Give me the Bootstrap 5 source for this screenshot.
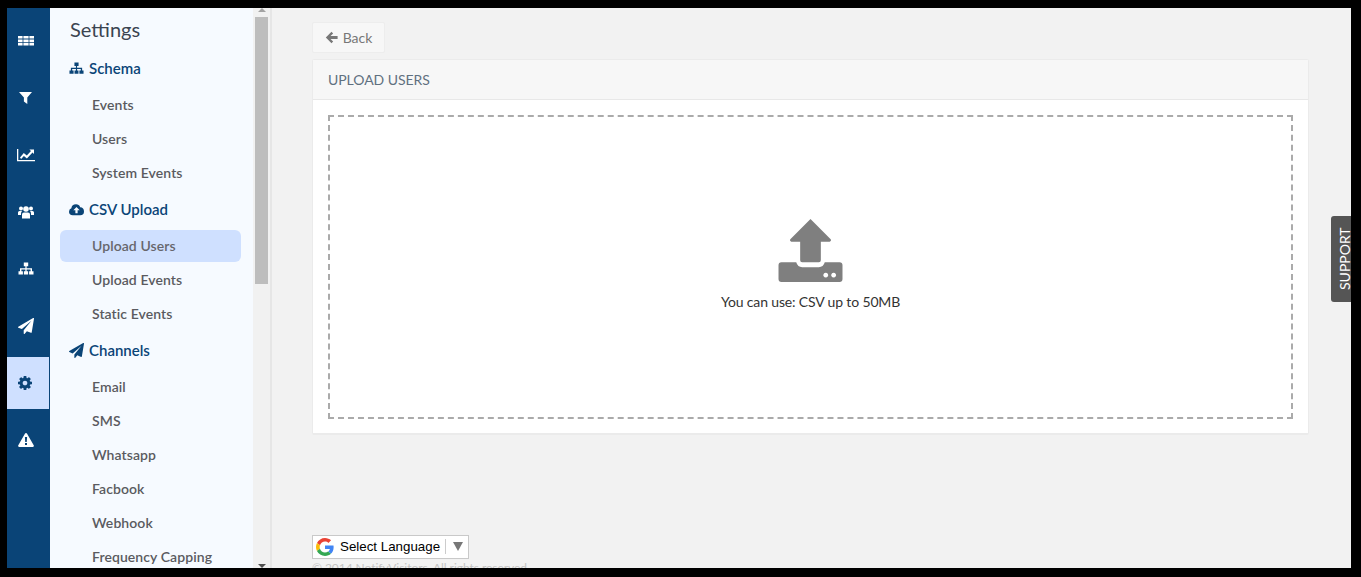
<!DOCTYPE html>
<html lang="en">
<head>
  <meta charset="UTF-8" />
  <meta name="viewport" content="width=device-width, initial-scale=1" />
  <title>Upload Users</title>
  <link href="https://cdn.jsdelivr.net/npm/bootstrap@5.3.0/dist/css/bootstrap.min.css" rel="stylesheet" />
  <style>
    html, body {
      height: 100%;
      margin: 0;
      overflow: hidden;
      background: #000;
      font-family: 'Lato', sans-serif;
    }
    .app-frame {
      position: relative;
      margin: 8px 10px 0 7px;
      width: 1344px;
      height: 560px;
      overflow: hidden;
      background: #f2f2f2;
    }
    .icon-rail {
      width: 43px;
      background: #0a4477;
      padding-top: 4px;
    }
    .rail-link {
      height: 57px;
      padding-right: 6px;
      color: #fff;
    }
    .rail-link svg { width: 16px; height: 16px; fill: currentColor; }
    .rail-link.current {
      height: 52px;
      margin: 3px 0 2px;
      padding-right: 6px;
      color: #0a4477;
      background: #cfe0ff;
      border-right: 1px solid #0a4477;
    }
    .side-panel {
      width: 203px;
      background: #f6faff;
      overflow: hidden;
      padding-left: 10px;
      padding-right: 12px;
    }
    .panel-title {
      font-size: 20px;
      font-weight: 400;
      color: #3b4451;
      line-height: 24px;
      margin: 9px 0 10px 10px;
    }
    .group-head {
      height: 34px;
      margin: 3px 0;
      padding-left: 9px;
      color: #0a4477;
      font-size: 15px;
      font-weight: 600;
      gap: 5px;
    }
    .group-head.lifted { margin: 2px 0 4px; }
    .group-head.tight { margin: 2px 0 3px; }
    .group-head svg { width: 15px; height: 15px; fill: currentColor; flex: none; }
    .side-link {
      height: 34px;
      line-height: 34px;
      padding-left: 32px;
      font-size: 14px;
      font-weight: 600;
      letter-spacing: .08px;
      color: #5a5a60;
      text-decoration: none;
      border-radius: 6px;
    }
    .side-link.current {
      height: 32px;
      line-height: 32px;
      margin: 0 0 1px;
      background: #cfe0ff;
      color: #66666c;
    }
    .side-scroll {
      width: 17px;
      background: #f1f1f1;
      position: relative;
      flex: none;
    }
    .side-scroll i {
      display: block;
      margin: 9px 2px 0;
      height: 267px;
      background: #bdbdbd;
    }
    .side-scroll b {
      position: absolute;
      left: 5px;
      border-left: 4px solid transparent;
      border-right: 4px solid transparent;
    }
    .arrow-up { top: 0; border-bottom: 4px solid #a3a3a3; }
    .arrow-down { bottom: 0; border-top: 4px solid #505050; }
    .main-area {
      border-left: 2px solid #e6e6e6;
      padding: 14px 42px 0 40px;
      min-width: 0;
    }
    .back-btn {
      width: 73px;
      height: 31px;
      padding: 0;
      background: #f7f7f7;
      border: 1px solid #ededed;
      border-radius: 2px;
      color: #777;
      font-size: 14px;
      gap: 5px;
    }
    .back-btn svg { width: 13px; height: 13px; fill: #777; }
    .upload-card {
      margin-top: 6px;
      height: 376px;
      border: 1px solid #ebebeb;
      border-bottom-width: 2px;
      border-radius: 2px;
      background: #fff;
    }
    .upload-card .card-header {
      height: 40px;
      padding: 0 15px;
      line-height: 40px;
      background: #f7f7f7;
      border-bottom: 1px solid #e8e8e8;
      border-radius: 0;
      color: #5f7080;
      font-size: 14px;
      letter-spacing: -.05px;
    }
    .upload-card .card-body { padding: 15px; }
    .drop-box {
      height: 304px;
      border: 2px dashed #aaa;
      color: #333;
      font-size: 14px;
      letter-spacing: -.15px;
      padding-top: 102px;
    }
    .drop-box svg { width: 65px; height: 63px; fill: #7f7f7f; display: block; }
    .drop-box p { margin: 10px 0 0; line-height: 20px; }
    .lang-box {
      position: absolute;
      left: 305px;
      top: 527px;
      width: 157px;
      height: 24px;
      background: #fff;
      border: 1px solid #c9c9c9;
      font-family: 'Liberation Sans', sans-serif;
      font-size: 13.33px;
      line-height: 20px;
      color: #000;
      padding: 0 0 1px 3px;
      white-space: nowrap;
    }
    .lang-box svg { width: 18px; height: 18px; margin-right: 6px; flex: none; }
    .lang-sep { width: 1px; height: 15px; background: #ccc; margin: 0 7px 0 5px; flex: none; }
    .lang-caret {
      border-left: 5px solid transparent;
      border-right: 5px solid transparent;
      border-top: 9px solid #777;
      flex: none;
    }
    .copy-line {
      position: absolute;
      left: 305px;
      top: 552px;
      font-size: 12px;
      line-height: 16px;
      letter-spacing: -.05px;
      color: #c4c4c4;
      white-space: nowrap;
    }
    .support-tab {
      position: absolute;
      right: 0;
      top: 208px;
      width: 20px;
      height: 86px;
      padding-right: 8px;
      background: #555;
      color: #fff;
      font-size: 14px;
      line-height: 12px;
      writing-mode: vertical-rl;
      transform: rotate(180deg);
      border-radius: 0 3px 3px 0;
    }
  </style>
</head>
<body>
  <div class="app-frame d-flex">
    <div class="icon-rail d-flex flex-column flex-shrink-0">
      <a class="rail-link d-flex align-items-center justify-content-center">
        <svg viewBox="0 0 16 16"><path d="M0 3h4.600v2.600H0zM5.400 3h5.200v2.600H5.400zM11.400 3H16v2.600h-4.600zM0 6.400h4.600V9H0zM5.400 6.400h5.200V9H5.400zM11.400 6.400H16V9h-4.600zM0 9.800h4.600v2.600H0zM5.400 9.800h5.200v2.600H5.400zM11.400 9.800H16v2.600h-4.600z"/></svg>
      </a>
      <a class="rail-link d-flex align-items-center justify-content-center">
        <svg viewBox="0 0 16 16"><path d="M1 2h13L9.300 7.600V14l-3.400-2.400V7.600z"/></svg>
      </a>
      <a class="rail-link d-flex align-items-center justify-content-center">
        <svg viewBox="0 0 18 16" style="width:18px"><path d="M0 2h1.300v11H18v1.300H0z"/><path d="M3 10.500 6.800 6l3 2.600L14 4l-1.600-1.500H17v4.600l-1.500-1.500-5.600 6-3-2.600-2.800 3z"/></svg>
      </a>
      <a class="rail-link d-flex align-items-center justify-content-center">
        <svg viewBox="0 0 16 16"><circle cx="8" cy="5" r="2.800"/><circle cx="3" cy="4.400" r="2"/><circle cx="13" cy="4.400" r="2"/><path d="M4 14.500V10.500q0-2 2-2h4q2 0 2 2v4zM0 11V8.500Q0 7 1.500 7H4q-1 .8-1 3v1zM16 11V8.500Q16 7 14.500 7H12q1 .8 1 3v1z"/></svg>
      </a>
      <a class="rail-link d-flex align-items-center justify-content-center">
        <svg viewBox="0 0 16 16"><path d="M5.800 1.500h4.400v3.700H8.600v2h5.400v3h1.500v3.300h-4.400v-3.300h1.500V8.500H8.600v1.700h1.500v3.300H5.900v-3.300h1.500V8.500H3.400v1.700h1.500v3.300H.5v-3.300H2v-3h5.400v-2H5.800z"/></svg>
      </a>
      <a class="rail-link d-flex align-items-center justify-content-center">
        <svg viewBox="0 0 1792 1792"><path d="M1764 11q33 24 27 64l-256 1536q-5 29-32 45-14 8-31 8-11 0-24-5l-453-185-242 295q-18 23-49 23-13 0-22-4-19-7-30.500-23.500t-11.500-36.500v-349l864-1059-1069 925-395-162q-37-14-40-55-2-40 32-59l1664-960q15-9 32-9 20 0 36 11z"/></svg>
      </a>
      <a class="rail-link current d-flex align-items-center justify-content-center">
        <svg viewBox="128 128 1536 1536" style="width:14px;height:14px"><path fill-rule="evenodd" d="M1152 896q0-106-75-181t-181-75-181 75-75 181 75 181 181 75 181-75 75-181zm512-109v222q0 12-8 23t-20 13l-185 28q-19 54-39 91 35 50 107 138 10 12 10 25t-9 23q-27 37-99 108t-94 71q-12 0-26-9l-138-108q-44 23-91 38-16 136-29 186-7 28-36 28h-222q-14 0-24.500-8.500t-11.500-21.500l-28-184q-49-16-90-37l-141 107q-10 9-25 9-14 0-25-11-126-114-165-168-7-10-7-23 0-12 8-23 15-21 51-66.500t54-70.500q-27-50-41-99l-183-27q-13-2-21-12.500t-8-23.500v-222q0-12 8-23t19-13l186-28q14-46 39-92-40-57-107-138-10-12-10-24 0-10 9-23 26-36 98.500-107.500t94.500-71.500q13 0 26 10l138 107q44-23 91-38 16-136 29-186 7-28 36-28h222q14 0 24.500 8.500t11.500 21.500l28 184q49 16 90 37l142-107q9-9 24-9 13 0 25 10 129 119 165 170 7 8 7 22 0 12-8 23-15 21-51 66.500t-54 70.500q26 50 41 98l183 28q13 2 21 12.500t8 23.500z"/></svg>
      </a>
      <a class="rail-link d-flex align-items-center justify-content-center">
        <svg viewBox="0 0 16 16"><path fill-rule="evenodd" d="M8 1q.7 0 1.100.7l6.600 11.600q.7 1.400-.8 1.700H1.100q-1.500-.3-.8-1.700L6.900 1.700Q7.300 1 8 1zM6.900 5l.3 5h1.600l.3-5zM7 11v2h2v-2z"/></svg>
      </a>
    </div>

    <div class="side-panel flex-shrink-0">
      <h5 class="panel-title">Settings</h5>
      <div class="group-head d-flex align-items-center">
        <svg viewBox="0 0 16 16"><path d="M5.800 1.500h4.400v3.700H8.600v2h5.400v3h1.500v3.300h-4.400v-3.300h1.500V8.500H8.600v1.700h1.500v3.300H5.900v-3.300h1.500V8.500H3.400v1.700h1.500v3.300H.5v-3.300H2v-3h5.400v-2H5.800z"/></svg>
        Schema
      </div>
      <nav class="nav flex-column">
        <a class="side-link">Events</a>
        <a class="side-link">Users</a>
        <a class="side-link">System Events</a>
      </nav>
      <div class="group-head lifted d-flex align-items-center">
        <svg viewBox="0 0 16 16"><path fill-rule="evenodd" d="M4 14Q0 14 0 10.300 0 7.500 2.500 6.700 3 2.500 7.500 2.500q3.300 0 4.400 3Q16 5.700 16 10q0 4-4 4zM8 5.200 4.600 8.800H6.800V12h2.400V8.800h2.200z"/></svg>
        CSV Upload
      </div>
      <nav class="nav flex-column">
        <a class="side-link current">Upload Users</a>
        <a class="side-link">Upload Events</a>
        <a class="side-link">Static Events</a>
      </nav>
      <div class="group-head tight d-flex align-items-center">
        <svg viewBox="0 0 1792 1792"><path d="M1764 11q33 24 27 64l-256 1536q-5 29-32 45-14 8-31 8-11 0-24-5l-453-185-242 295q-18 23-49 23-13 0-22-4-19-7-30.500-23.500t-11.500-36.500v-349l864-1059-1069 925-395-162q-37-14-40-55-2-40 32-59l1664-960q15-9 32-9 20 0 36 11z"/></svg>
        Channels
      </div>
      <nav class="nav flex-column">
        <a class="side-link">Email</a>
        <a class="side-link">SMS</a>
        <a class="side-link">Whatsapp</a>
        <a class="side-link">Facbook</a>
        <a class="side-link">Webhook</a>
        <a class="side-link">Frequency Capping</a>
      </nav>
    </div>
    <div class="side-scroll"><b class="arrow-up"></b><i></i><b class="arrow-down"></b></div>

    <div class="main-area flex-grow-1">
      <button type="button" class="btn back-btn d-inline-flex align-items-center justify-content-center">
        <svg viewBox="0 0 16 16"><path d="M8 1 10 3 6.800 6.200H15.500v3.600H6.800L10 13 8 15 1 8z"/></svg>
        Back
      </button>
      <div class="card upload-card">
        <div class="card-header">UPLOAD USERS</div>
        <div class="card-body">
          <div class="drop-box d-flex flex-column align-items-center">
            <svg viewBox="0 0 65 64"><path d="M32.500 0 53 20.500q1 2-1 2.500H43v19q0 2-2 2H24q-2 0-2-2V23H13q-2-.500-1-2.500z"/><path fill-rule="evenodd" d="M3 44H18q1.500 5 6 5h17q4.500 0 6-5h15q3 0 3 3v14q0 3-3 3H3q-3 0-3-3V47q0-3 3-3zM48 54.500a2.500 2.500 0 1 0 .01 0zM56 54.500a2.500 2.500 0 1 0 .01 0z"/></svg>
            <p>You can use: CSV up to 50MB</p>
          </div>
        </div>
      </div>
    </div>

    <div class="lang-box d-flex align-items-center">
      <svg viewBox="0 0 48 48"><path fill="#EA4335" d="M24 9.500c3.500 0 6.700 1.200 9.200 3.600l6.900-6.900C35.900 2.400 30.500 0 24 0 14.600 0 6.500 5.400 2.600 13.200l8 6.200C12.500 13.700 17.800 9.500 24 9.500z"/><path fill="#4285F4" d="M46.980 24.550c0-1.570-.15-3.090-.38-4.550H24v9.020h12.940c-.58 2.960-2.260 5.480-4.780 7.180l7.730 6c4.510-4.180 7.090-10.360 7.090-17.650z"/><path fill="#FBBC05" d="M10.530 28.590c-.48-1.450-.76-2.990-.76-4.590s.27-3.140.76-4.590l-7.980-6.190C.92 16.460 0 20.120 0 24c0 3.880.92 7.540 2.560 10.780l7.970-6.190z"/><path fill="#34A853" d="M24 48c6.480 0 11.930-2.130 15.890-5.810l-7.730-6c-2.150 1.450-4.920 2.300-8.160 2.300-6.260 0-11.570-4.220-13.470-9.910l-7.980 6.190C6.510 42.620 14.620 48 24 48z"/></svg>
      <span>Select Language</span>
      <span class="lang-sep"></span>
      <span class="lang-caret"></span>
    </div>
    <div class="copy-line">© 2014 NotifyVisitors. All rights reserved.</div>

    <div class="support-tab d-flex align-items-center justify-content-center">SUPPORT</div>
  </div>
  <script src="https://cdn.jsdelivr.net/npm/bootstrap@5.3.0/dist/js/bootstrap.bundle.min.js"></script>
</body>
</html>
